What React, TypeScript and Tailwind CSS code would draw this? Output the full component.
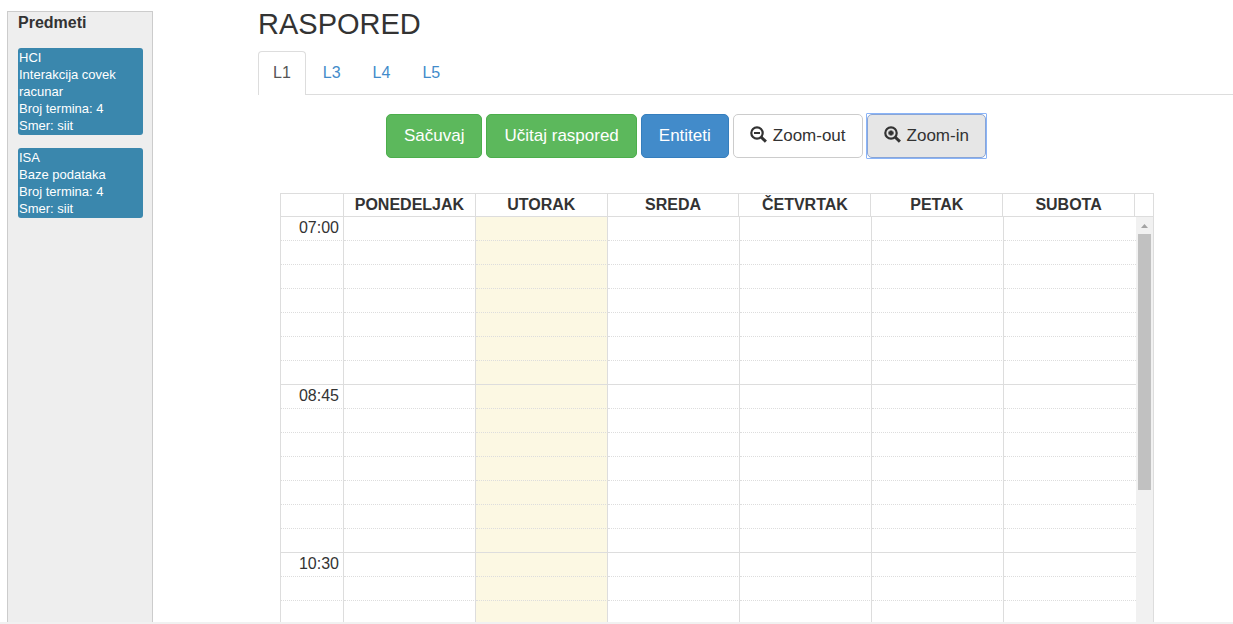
import { useState } from 'react'

type Subject = { code: string; name: string; sessions: number; program: string }

const subjects: Subject[] = [
  { code: 'HCI', name: 'Interakcija covek racunar', sessions: 4, program: 'siit' },
  { code: 'ISA', name: 'Baze podataka', sessions: 4, program: 'siit' },
]

const rooms = ['L1', 'L3', 'L4', 'L5']
const days = ['PONEDELJAK', 'UTORAK', 'SREDA', 'ČETVRTAK', 'PETAK', 'SUBOTA']
const today = 'UTORAK'
const times = ['07:00', '08:45', '10:30']
const slotsPerBlock = 7

const slots = times.flatMap((time) =>
  Array.from({ length: slotsPerBlock }, (_, i) => ({
    key: `${time}-${i}`,
    label: i === 0 ? time : '',
    last: i === slotsPerBlock - 1,
  })),
)

function ZoomIcon({ kind }: { kind: 'in' | 'out' }) {
  return (
    <svg viewBox="0 0 17 17" className="mb-1 h-[17px] w-[17px]" fill="none" stroke="currentColor" aria-hidden="true">
      <circle cx="7" cy="7" r="5.7" strokeWidth="2.2" />
      <path d="M11 11l4.900 4.700" strokeWidth="3" />
      {kind === 'out' ? (
        <path d="M4 7h6" strokeWidth="2" />
      ) : (
        <path d="M5.600 4.400h2.800v1.200h1.200v2.800h-1.200v1.200h-2.800v-1.200h-1.200v-2.800h1.200z" fill="currentColor" stroke="none" />
      )}
    </svg>
  )
}

function Sidebar() {
  return (
    <aside className="mt-[11px] ml-[7px] w-[146px] shrink-0 border border-b-0 border-[#ccc] bg-[#eee] px-[9px]">
      <h2 className="mb-[15px] ml-px text-[16px] leading-[21px] font-bold">Predmeti</h2>
      <ul className="flex flex-col gap-[13px] pl-px">
        {subjects.map((s) => (
          <li key={s.code} className="rounded-[3px] bg-[#3a87ad] p-px text-[13px] leading-[17px] text-white">
            <p>{s.code}</p>
            <p>{s.name}</p>
            <p>Broj termina: {s.sessions}</p>
            <p>Smer: {s.program}</p>
          </li>
        ))}
      </ul>
    </aside>
  )
}

function Tabs() {
  const [active, setActive] = useState('L1')
  return (
    <nav className="flex h-11 gap-[2px] border-b border-[#ddd]">
      {rooms.map((room) => (
        <a
          key={room}
          href={`#${room}`}
          onClick={() => setActive(room)}
          className={
            room === active
              ? '-mb-px rounded-t border border-b-0 border-[#ddd] bg-white px-[14px] pt-[9px] text-[16px] leading-6 text-[#555]'
              : 'border border-b-0 border-transparent px-[14px] pt-[9px] text-[16px] leading-6 text-[#428bca]'
          }
        >
          {room}
        </a>
      ))}
    </nav>
  )
}

function Toolbar() {
  const base = 'flex h-11 items-center gap-[6px] rounded-[5px] border text-[17px] leading-6 whitespace-nowrap '
  return (
    <div className="ml-32 flex gap-1 pt-[19px]">
      <button type="button" className={base + 'border-[#4cae4c] bg-[#5cb85c] px-[17px] text-white'}>Sačuvaj</button>
      <button type="button" className={base + 'border-[#4cae4c] bg-[#5cb85c] px-[17px] text-white'}>Učitaj raspored</button>
      <button type="button" className={base + 'border-[#357ebd] bg-[#428bca] px-[17px] text-white'}>Entiteti</button>
      <button type="button" className={base + 'border-[#ccc] bg-white px-4'}>
        <ZoomIcon kind="out" />
        Zoom-out
      </button>
      <div className="-m-px rounded-[1px] border border-[#8ab4f8]">
        <button type="button" className={base + 'border-[#89a5d6] bg-[#e6e6e6] px-4'}>
          <ZoomIcon kind="in" />
          Zoom-in
        </button>
      </div>
    </div>
  )
}

function Scrollbar() {
  return (
    <div className="flex w-[17px] shrink-0 flex-col bg-[#f1f1f1]" aria-hidden="true">
      <svg viewBox="0 0 17 17" className="h-[17px] w-[17px]">
        <path d="M5 11h7L8.500 7z" fill="#a3a3a3" />
      </svg>
      <div className="ml-[2px] h-64 w-[13px] bg-[#c1c1c1]" />
    </div>
  )
}

function Calendar() {
  return (
    <section className="mt-[35px] mr-[79px] ml-[22px] flex min-h-0 flex-1 flex-col border border-b-0 border-[#ddd]">
      <table className="w-full shrink-0 table-fixed border-separate border-spacing-0">
        <thead>
          <tr className="h-[23px]">
            <th className="w-[63px] border-r border-b border-[#ddd] p-0" />
            {days.map((day) => (
              <th key={day} className="border-r border-b border-[#ddd] p-0 text-[16px] leading-[22px] font-bold">
                {day}
              </th>
            ))}
            <th className="w-[18px] border-b border-[#ddd] p-0" />
          </tr>
        </thead>
      </table>
      <div className="flex min-h-0 flex-1 overflow-hidden">
        <div className="min-w-0 flex-1">
          <table className="w-full table-fixed border-separate border-spacing-0">
            <tbody>
              {slots.map((slot) => {
                const line = slot.last ? 'border-b border-b-[#ddd] ' : 'border-b border-b-[#ddd] [border-bottom-style:dotted] '
                return (
                  <tr key={slot.key} className="h-6">
                    <th
                      scope="row"
                      className={line + 'w-[63px] border-r border-r-[#ddd] p-0 pr-1 text-right align-top text-[16px] leading-[22px] font-normal'}
                    >
                      {slot.label}
                    </th>
                    {days.map((day) => (
                      <td
                        key={day}
                        className={line + 'border-r border-r-[#ddd] p-0 last:border-r-0 ' + (day === today ? 'bg-[#fcf8e3]' : '')}
                      />
                    ))}
                  </tr>
                )
              })}
            </tbody>
          </table>
        </div>
        <Scrollbar />
      </div>
    </section>
  )
}

export default function App() {
  return (
    <div className="flex h-screen flex-col overflow-hidden bg-white font-['Liberation_Sans',Arial,sans-serif] text-[#333]">
      <div className="flex min-h-0 flex-1">
        <Sidebar />
        <main className="ml-[105px] flex min-w-0 flex-1 flex-col">
          <h1 className="mt-2 mb-[10px] text-[29px] leading-[33px]">RASPORED</h1>
          <Tabs />
          <Toolbar />
          <Calendar />
        </main>
      </div>
      <div className="h-[2px] shrink-0 bg-[#f1f1f1]" />
    </div>
  )
}
